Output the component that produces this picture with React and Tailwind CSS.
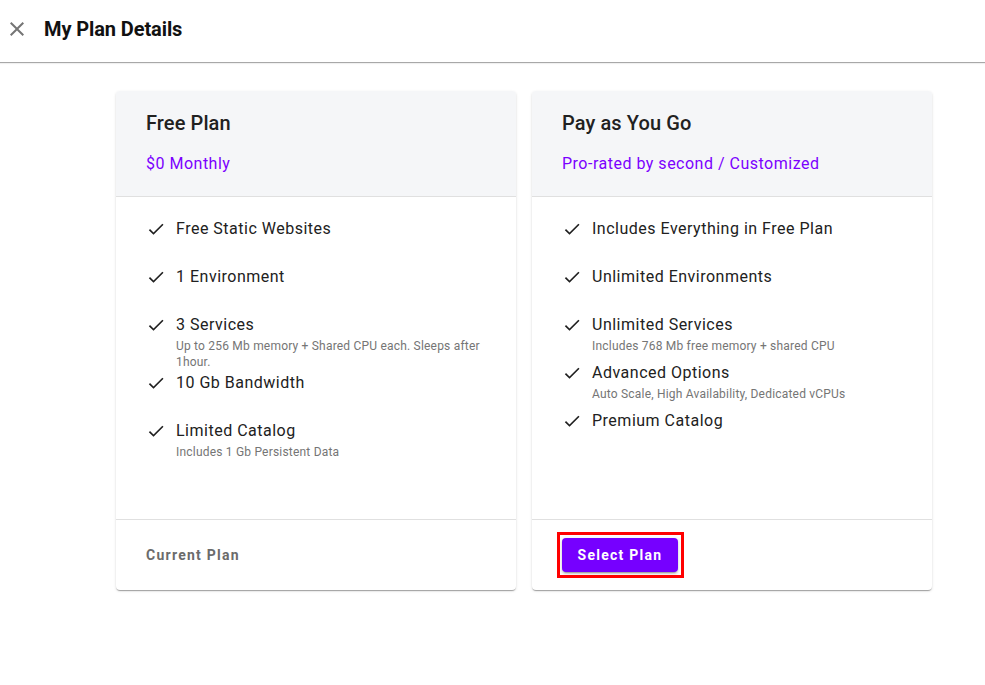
const plans = [
  {
    name: "Free Plan",
    price: "$0 Monthly",
    features: [
      { title: "Free Static Websites" },
      { title: "1 Environment" },
      { title: "3 Services", note: "Up to 256 Mb memory + Shared CPU each. Sleeps after 1hour." },
      { title: "10 Gb Bandwidth" },
      { title: "Limited Catalog", note: "Includes 1 Gb Persistent Data" },
    ],
    current: true,
  },
  {
    name: "Pay as You Go",
    price: "Pro-rated by second / Customized",
    features: [
      { title: "Includes Everything in Free Plan" },
      { title: "Unlimited Environments" },
      { title: "Unlimited Services", note: "Includes 768 Mb free memory + shared CPU" },
      { title: "Advanced Options", note: "Auto Scale, High Availability, Dedicated vCPUs" },
      { title: "Premium Catalog" },
    ],
    current: false,
  },
];

function CheckIcon() {
  return (
    <svg viewBox="0 0 24 24" className="h-5 w-5 shrink-0 fill-[#1f1f1f]">
      <path d="M9 16.17 4.83 12l-1.42 1.41L9 19 21 7l-1.41-1.41z" />
    </svg>
  );
}

function CloseIcon() {
  return (
    <svg viewBox="0 0 24 24" className="h-6 w-6 fill-[#757575]">
      <path d="M19 6.41 17.59 5 12 10.59 6.41 5 5 6.41 10.59 12 5 17.59 6.41 19 12 13.41 17.59 19 19 17.59 13.41 12z" />
    </svg>
  );
}

function PlanCard({ plan }) {
  return (
    <div className="flex w-[400px] flex-col rounded bg-white shadow-[0_2px_1px_-1px_rgba(0,0,0,0.2),0_1px_1px_0_rgba(0,0,0,0.14),0_1px_3px_0_rgba(0,0,0,0.12)]">
      <div className="rounded-t border-b border-[#e0e0e0] bg-[#f5f6f8] px-[30px] pt-4 pb-5">
        <h2 className="text-[20px] font-medium leading-8 tracking-[0.1px] text-[#212121]">{plan.name}</h2>
        <p className="mt-[13px] text-base leading-6 tracking-[0.5px] text-[#7b00ff]">{plan.price}</p>
      </div>

      <ul className="h-[323px] border-b border-[#e0e0e0] px-[30px] pt-5">
        {plan.features.map((item) => (
          <li key={item.title} className="min-h-12">
            <div className="flex h-6 items-center gap-[10px]">
              <CheckIcon />
              <span className="text-base leading-6 tracking-[0.5px] text-[#212121]">{item.title}</span>
            </div>
            {item.note ? (
              <p className="mt-px pb-px pl-[30px] text-xs leading-4 tracking-[0.2px] text-[#757575]">{item.note}</p>
            ) : null}
          </li>
        ))}
      </ul>

      <div className="flex h-[70px] items-center px-[30px]">
        {plan.current ? (
          <span className="text-sm font-bold tracking-[1.25px] text-[#6b6b6b]">Current Plan</span>
        ) : (
          <div className="relative">
            <button
              type="button"
              className="h-[34px] w-[116px] rounded bg-[#7600ff] text-sm font-bold tracking-[1.25px] text-white shadow-[0_3px_1px_-2px_rgba(0,0,0,0.2),0_2px_2px_0_rgba(0,0,0,0.14),0_1px_5px_0_rgba(0,0,0,0.12)]"
            >
              Select Plan
            </button>
            <div className="pointer-events-none absolute -top-[6px] -right-[6px] -bottom-[6px] -left-[5px] border-[3px] border-[#ff0000]" />
          </div>
        )}
      </div>
    </div>
  );
}

export default function App() {
  return (
    <div className="min-h-[685px] bg-white font-['Roboto','Liberation_Sans',sans-serif]">
      <header className="flex h-[63px] items-center border-b border-[#a8a8a8] pb-1 shadow-[0_1px_1px_rgba(0,0,0,0.06)]">
        <button type="button" className="ml-[5px] flex h-6 w-6 items-center justify-center">
          <CloseIcon />
        </button>
        <h1 className="ml-[15px] text-[20px] font-bold tracking-[-0.1px] text-[#111]">My Plan Details</h1>
      </header>

      <main className="flex gap-4 pt-7 pl-[116px]">
        {plans.map((plan) => (
          <PlanCard key={plan.name} plan={plan} />
        ))}
      </main>
    </div>
  );
}
